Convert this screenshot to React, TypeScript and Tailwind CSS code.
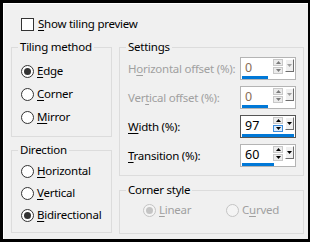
import React from "react";

function U({ children }: { children: React.ReactNode }) {
  return <span className="underline decoration-1 underline-offset-[2px]">{children}</span>;
}

function Radio({ checked, disabled }: { checked?: boolean; disabled?: boolean }) {
  return (
    <span
      className={`flex h-[13px] w-[13px] shrink-0 items-center justify-center rounded-full border ${
        disabled ? "border-[#c4c4c4] bg-[#f4f4f4]" : "border-[#333333] bg-white"
      }`}
    >
      {checked && (
        <span className={`h-[7px] w-[7px] rounded-full ${disabled ? "bg-[#c4c4c4]" : "bg-[#333333]"}`} />
      )}
    </span>
  );
}

function RadioRow({
  checked,
  disabled,
  children,
}: {
  checked?: boolean;
  disabled?: boolean;
  children: React.ReactNode;
}) {
  return (
    <div
      className={`flex h-[16px] items-center gap-[3px] whitespace-nowrap ${
        disabled ? "text-[#a0a0a0]" : "text-black"
      }`}
    >
      <Radio checked={checked} disabled={disabled} />
      <span>{children}</span>
    </div>
  );
}

function SpinBox({
  value,
  pct,
  disabled,
  focused,
}: {
  value: string;
  pct: number;
  disabled?: boolean;
  focused?: boolean;
}) {
  return (
    <div
      className={`relative flex h-[23px] w-[56px] shrink-0 items-start border bg-white ${
        focused ? "border-[#555555]" : "border-[#b4b4b4]"
      }`}
    >
      <span
        className={`mt-[2px] flex-1 pl-[4px] text-[12.5px] tracking-normal ${
          disabled ? "text-[#8a6d55]" : "text-black"
        }`}
      >
        {value}
      </span>
      <div className="mt-[1px] flex w-[10px] flex-col gap-[1px]">
        <div className="flex h-[7px] items-center justify-center border border-[#c8c8c8] bg-[#ececec]">
          <svg width="5" height="3" viewBox="0 0 5 3">
            <path d="M0 3 L2.5 0 L5 3 Z" fill={disabled ? "#7a7a7a" : "#000"} />
          </svg>
        </div>
        <div
          className={`flex h-[7px] items-center justify-center border ${
            focused ? "border-[#3c8dde] bg-[#dcecfc]" : "border-[#c8c8c8] bg-[#ececec]"
          }`}
        >
          <svg width="5" height="3" viewBox="0 0 5 3">
            <path d="M0 0 L2.5 3 L5 0 Z" fill={disabled ? "#7a7a7a" : "#000"} />
          </svg>
        </div>
      </div>
      <div className="ml-[2px] mr-[1px] mt-[1px] flex h-[13px] w-[9px] items-center justify-center border-t border-l border-r border-b border-t-white border-l-white border-r-[#6e6e6e] border-b-[#6e6e6e] bg-[#f0f0f0]">
        <svg width="5" height="3" viewBox="0 0 5 3">
          <path d="M0 0 L2.5 3 L5 0 Z" fill={disabled ? "#a0a0a0" : "#000"} />
        </svg>
      </div>
      <div className="absolute bottom-0 left-[1px] h-[3px] bg-[#0078d7]" style={{ width: `${pct}px` }} />
    </div>
  );
}

function SettingRow({
  label,
  disabled,
  children,
}: {
  label: React.ReactNode;
  disabled?: boolean;
  children: React.ReactNode;
}) {
  return (
    <div className="flex h-[23px] items-center justify-between">
      <span className={`whitespace-nowrap ${disabled ? "text-[#a0a0a0]" : "text-black"}`}>{label}</span>
      {children}
    </div>
  );
}

function Group({
  title,
  className,
  children,
}: {
  title: string;
  className: string;
  children: React.ReactNode;
}) {
  return (
    <fieldset className={`border border-[#dcdcdc] p-0 ${className}`}>
      <legend className="ml-[6px] whitespace-nowrap px-[2px]">{title}</legend>
      {children}
    </fieldset>
  );
}

export default function App() {
  return (
    <div className="h-[242px] w-[310px] overflow-hidden border-t-[3px] border-l-[3px] border-r-2 border-b-[3px] border-black bg-[#f0f0f0] font-['Noto_Sans',sans-serif] text-[11.5px] leading-[16px] tracking-[-0.25px] text-black">
      <div className="h-full border-t border-l border-white">
        <div className="flex items-center gap-[4px] pl-[17px] pt-[12px]">
          <span className="h-[13px] w-[13px] border border-[#333333] bg-white" />
          <span className="whitespace-nowrap">
            <U>S</U>how tiling preview
          </span>
        </div>
        <div className="mt-[7px] flex gap-[7px] pl-[7px]">
          <div className="flex w-[101px] flex-col gap-[5px]">
            <Group title="Tiling method" className="h-[98px]">
              <div className="flex flex-col gap-[7px] px-[9px] pt-[8px]">
                <RadioRow checked>
                  <U>E</U>dge
                </RadioRow>
                <RadioRow>
                  <U>C</U>orner
                </RadioRow>
                <RadioRow>
                  <U>M</U>irror
                </RadioRow>
              </div>
            </Group>
            <Group title="Direction" className="h-[91px]">
              <div className="flex flex-col gap-[6px] px-[9px] pt-[5px]">
                <RadioRow>
                  <U>H</U>orizontal
                </RadioRow>
                <RadioRow>
                  <U>V</U>ertical
                </RadioRow>
                <RadioRow checked>
                  <U>B</U>idirectional
                </RadioRow>
              </div>
            </Group>
          </div>
          <div className="flex w-[185px] flex-col gap-[6px]">
            <Group title="Settings" className="h-[137px]">
              <div className="flex flex-col gap-[6px] pl-[8px] pr-[7px] pt-[2px]">
                <SettingRow label={<>H<U>o</U>rizontal offset (%):</>} disabled>
                  <SpinBox value="0" pct={26} disabled />
                </SettingRow>
                <SettingRow label={<>Ver<U>t</U>ical offset (%):</>} disabled>
                  <SpinBox value="0" pct={26} disabled />
                </SettingRow>
                <SettingRow label={<><U>W</U>idth (%):</>}>
                  <SpinBox value="97" pct={52} focused />
                </SettingRow>
                <SettingRow label={<><U>T</U>ransition (%):</>}>
                  <SpinBox value="60" pct={32} />
                </SettingRow>
              </div>
            </Group>
            <Group title="Corner style" className="h-[52px]">
              <div className="grid grid-cols-[83px_auto] pl-[23px] pt-[4px]">
                <RadioRow checked disabled>
                  <U>L</U>inear
                </RadioRow>
                <RadioRow disabled>
                  C<U>u</U>rved
                </RadioRow>
              </div>
            </Group>
          </div>
        </div>
      </div>
    </div>
  );
}
